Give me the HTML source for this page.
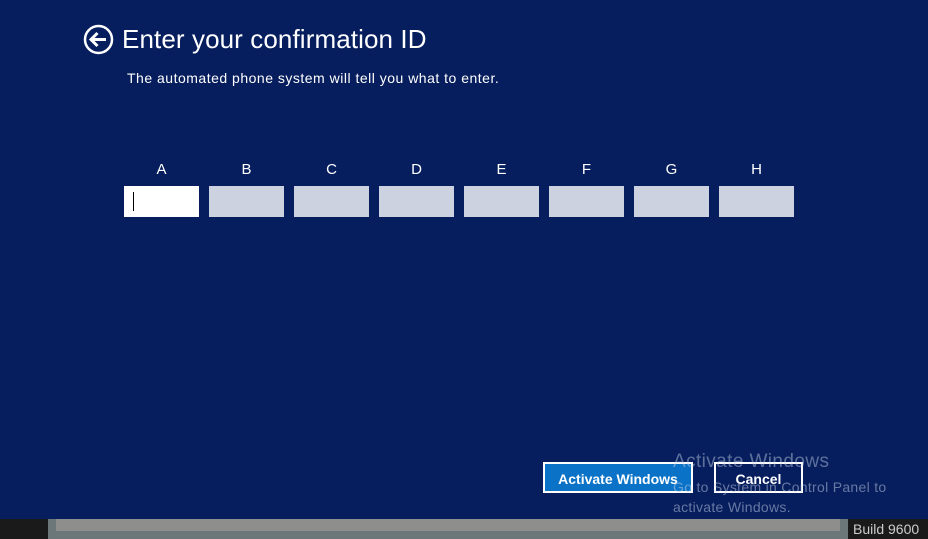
<!DOCTYPE html>
<html><head><style>
body{margin:0;width:928px;height:539px;background:#061e5e;position:relative;overflow:hidden;font-family:"Segoe UI","Liberation Sans",sans-serif;color:#fff}
.a{position:absolute}
.box{position:absolute;top:186px;width:75px;height:31px;background:#cdd2e0}
.lbl{position:absolute;top:161px;width:75px;text-align:center;font-size:15px}
</style></head><body>
<svg class="a" style="left:83px;top:24px" width="31" height="31" viewBox="0 0 31 31"><circle cx="15.5" cy="15.5" r="13.5" fill="none" stroke="#fff" stroke-width="2.5"/><path d="M8 15.5H23M14.5 9L8 15.5L14.5 22" fill="none" stroke="#fff" stroke-width="3"/></svg>
<div class="a" style="left:122px;top:24px;font-size:26px;letter-spacing:0.1px">Enter your confirmation ID</div>
<div class="a" style="left:127px;top:70px;font-size:14px;letter-spacing:0.5px">The automated phone system will tell you what to enter.</div>
<div class="lbl" style="left:124px">A</div><div class="lbl" style="left:209px">B</div><div class="lbl" style="left:294px">C</div><div class="lbl" style="left:379px">D</div><div class="lbl" style="left:464px">E</div><div class="lbl" style="left:549px">F</div><div class="lbl" style="left:634px">G</div><div class="lbl" style="left:719px">H</div>
<div class="box" style="left:124px;background:#fff"><div class="a" style="left:9px;top:6px;width:1px;height:19px;background:#000"></div></div>
<div class="box" style="left:209px"></div><div class="box" style="left:294px"></div><div class="box" style="left:379px"></div><div class="box" style="left:464px"></div><div class="box" style="left:549px"></div><div class="box" style="left:634px"></div><div class="box" style="left:719px"></div>
<div class="a" style="left:543px;top:462px;width:146px;height:27px;border:2px solid #fff;background:#0a73c8;font-size:14px;font-weight:bold;text-align:center;line-height:30px">Activate Windows</div>
<div class="a" style="left:714px;top:462px;width:85px;height:27px;border:2px solid #fff;font-size:14px;font-weight:bold;text-align:center;line-height:30px">Cancel</div>
<div class="a" style="left:673px;top:451px;font-size:19px;letter-spacing:0.4px;color:rgba(200,210,230,0.45)">Activate Windows</div>
<div class="a" style="left:673px;top:477px;font-size:14px;letter-spacing:0.3px;line-height:20px;color:rgba(200,210,230,0.5)">Go to System in Control Panel to<br>activate Windows.</div>
<div class="a" style="left:0;top:519px;width:48px;height:20px;background:#1a1a1a"></div>
<div class="a" style="left:48px;top:519px;width:800px;height:20px;background:#6c7779"></div>
<div class="a" style="left:56px;top:519px;width:784px;height:12px;background:#8e8f8c"></div>
<div class="a" style="left:848px;top:519px;width:80px;height:20px;background:#1a1a1a;color:#ccc;font-size:14px;line-height:20px;padding-left:5px">Build 9600</div>
</body></html>
